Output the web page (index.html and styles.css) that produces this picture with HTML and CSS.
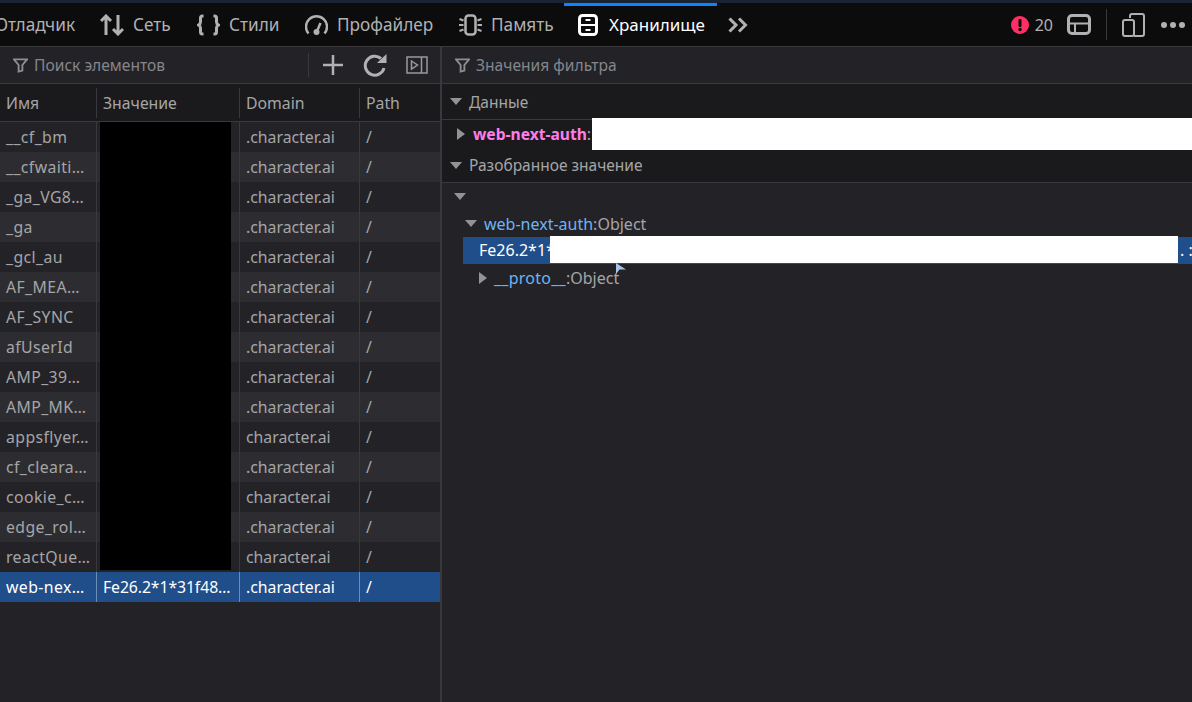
FILE: index.html
```html
<!DOCTYPE html>
<html lang="ru">
<head>
<meta charset="utf-8">
<title>Хранилище</title>
<link rel="stylesheet" href="styles.css">
</head>
<body>
<div class="strip"></div>
<header class="tabs">
  <nav class="tab-list">
    <div class="tab"><span>Отладчик</span></div>
    <div class="tab">
      <svg class="ic i-net" viewBox="0 0 24 22"><path d="M6 21V2M1 7l5-5 5 5M18 1V20M13 15l5 5 5-5"/></svg>
      <span>Сеть</span>
    </div>
    <div class="tab">
      <svg class="ic i-css" viewBox="0 0 23 22"><path d="M6.500 2H5.500Q3.500 2 3.500 4V8Q3.500 10 1.500 11Q3.500 12 3.500 14V18Q3.500 20 5.500 20H6.500M16.500 2H17.500Q19.500 2 19.500 4V8Q19.500 10 21.500 11Q19.500 12 19.500 14V18Q19.500 20 17.500 20H16.500"/></svg>
      <span>Стили</span>
    </div>
    <div class="tab">
      <svg class="ic i-gauge" viewBox="0 0 23 22"><path d="M3.500 19.500A10.500 10.500 0 1 1 19.500 19.500"/><path d="M12.500 16L15.500 9"/><circle class="ic-fill" cx="11.500" cy="18" r="3"/></svg>
      <span>Профайлер</span>
    </div>
    <div class="tab">
      <svg class="ic i-chip" viewBox="0 0 23 22"><rect x="6.500" y="1.500" width="10" height="19" rx="3"/><path class="thin" d="M.500 5l4 1.500M0 11H4.500M.500 17l4-1.500M22.500 5l-4 1.500M23 11H18.500M22.500 17l-4-1.500"/></svg>
      <span>Память</span>
    </div>
    <div class="tab tab-active">
      <svg class="ic i-store" viewBox="0 0 20 22"><rect x="1.500" y="1.500" width="17" height="19" rx="3"/><path class="thin" d="M1.500 11H18.500M7.500 6H12.500M7.500 16H12.500"/></svg>
      <span>Хранилище</span>
    </div>
    <svg class="ic more" viewBox="0 0 20 16"><path d="M1.500 1.500L8 8 1.500 14.500M11 1.500L17.500 8 11 14.500"/></svg>
  </nav>
  <div class="tab-tools">
    <svg class="err" viewBox="0 0 18 18"><circle cx="9" cy="9" r="9"/><rect x="7.500" y="3" width="3" height="8" rx="1"/><circle class="dot" cx="9" cy="13.500" r="1.700"/></svg>
    <span class="err-count">20</span>
    <svg class="ic layout" viewBox="0 0 24 21"><rect x="1.500" y="1.500" width="21" height="18" rx="3.500"/><path class="thin" d="M1.500 9.500H22.500M8 9.500V19.500"/></svg>
    <span class="tool-sep"></span>
    <svg class="ic device" viewBox="0 0 23 24"><path d="M8 5V3Q8 1 10 1H20Q22 1 22 3V21Q22 23 20 23H12"/><rect x="1" y="7" width="11" height="16" rx="2"/></svg>
    <span class="dots"><i></i><i></i><i></i></span>
  </div>
</header>
<main class="panes">
  <section class="left">
    <div class="toolbar">
      <svg class="filter" viewBox="0 0 16 16"><path d="M1 2H15L10 8V14L6 15V8Z"/></svg>
      <span class="search">Поиск элементов</span>
      <span class="bar-sep"></span>
      <svg class="ic plus" viewBox="0 0 22 22"><path d="M11 1V21M1 11H21"/></svg>
      <svg class="ic reload" viewBox="0 0 24 24"><path d="M21 15A9.500 9.500 0 1 1 18 5.500"/><path class="solid" d="M14 10H23.500V1Z"/></svg>
      <svg class="ic side" viewBox="0 0 22 18"><rect x="1" y="1" width="20" height="16"/><path d="M15.500 1V17M5.500 5l6 4-6 4Z"/></svg>
    </div>
    <div class="thead">
      <div>Имя</div><div>Значение</div><div>Domain</div><div>Path</div>
    </div>
    <div class="rows">
      <div class="row"><div>__cf_bm</div><div></div><div>.character.ai</div><div>/</div></div>
      <div class="row"><div>__cfwaiti…</div><div></div><div>.character.ai</div><div>/</div></div>
      <div class="row"><div>_ga_VG8…</div><div></div><div>.character.ai</div><div>/</div></div>
      <div class="row"><div>_ga</div><div></div><div>.character.ai</div><div>/</div></div>
      <div class="row"><div>_gcl_au</div><div></div><div>.character.ai</div><div>/</div></div>
      <div class="row"><div>AF_MEA…</div><div></div><div>.character.ai</div><div>/</div></div>
      <div class="row"><div>AF_SYNC</div><div></div><div>.character.ai</div><div>/</div></div>
      <div class="row"><div>afUserId</div><div></div><div>.character.ai</div><div>/</div></div>
      <div class="row"><div>AMP_39…</div><div></div><div>.character.ai</div><div>/</div></div>
      <div class="row"><div>AMP_MK…</div><div></div><div>.character.ai</div><div>/</div></div>
      <div class="row"><div>appsflyer…</div><div></div><div>character.ai</div><div>/</div></div>
      <div class="row"><div>cf_cleara…</div><div></div><div>.character.ai</div><div>/</div></div>
      <div class="row"><div>cookie_c…</div><div></div><div>character.ai</div><div>/</div></div>
      <div class="row"><div>edge_rol…</div><div></div><div>.character.ai</div><div>/</div></div>
      <div class="row"><div>reactQue…</div><div></div><div>character.ai</div><div>/</div></div>
      <div class="row row-sel"><div>web-nex…</div><div class="val-sel">Fe26.2*1*31f48…</div><div>.character.ai</div><div>/</div></div>
      <div class="redact-black"></div>
    </div>
  </section>
  <section class="right">
    <div class="toolbar">
      <svg class="filter" viewBox="0 0 16 16"><path d="M1 2H15L10 8V14L6 15V8Z"/></svg>
      <span class="search">Значения фильтра</span>
    </div>
    <div class="group"><i class="tri-down"></i>Данные</div>
    <div class="data-row">
      <i class="tri-right"></i><b class="pink">web-next-auth</b><span class="colon">:</span>
      <div class="redact-white data-redact"></div>
    </div>
    <div class="group group-2"><i class="tri-down"></i>Разобранное значение</div>
    <div class="tree">
      <div class="t-root"><i class="tri-down"></i></div>
      <div class="t-obj"><i class="tri-down"></i><span class="blue">web-next-auth</span>:Object</div>
      <div class="t-sel">Fe26.2*1*<div class="redact-white sel-redact"></div><span class="sel-tail">. :</span></div>
      <div class="t-proto"><i class="tri-right"></i><span class="blue proto">__proto__</span>:Object
        <svg class="cursor" viewBox="0 0 10 11"><path d="M0 0L10 6.500H3.500L0 11Z"/></svg>
      </div>
    </div>
  </section>
</main>
</body>
</html>
```
FILE: styles.css
```css
* { box-sizing: border-box; }
html, body { margin: 0; height: 100%; overflow: hidden; }
body {
  display: flex;
  flex-direction: column;
  width: 1192px;
  height: 702px;
  background: #232327;
  color: #b1b1b3;
  font-family: "Noto Sans", "Open Sans", sans-serif;
  font-size: 16px;
}
.strip { height: 3px; background: #1a2332; flex: none; }
.tabs {
  flex: none;
  height: 43px;
  background: #0c0c0d;
  display: flex;
  justify-content: space-between;
  align-items: center;
  overflow: hidden;
}
.tab-list {
  display: grid;
  grid-template-columns: 105px 97px 108px 154px 117px 153px auto;
  align-items: center;
  margin-left: -17px;
}
.tab { display: flex; align-items: center; gap: 9px; padding-left: 12px; height: 43px; color: #b1b1b3; white-space: nowrap; font-size: 17.200px; }
.tab-active { color: #fff; gap: 11px; padding-left: 14px; font-size: 17px; position: relative; }
.tab-active::before { content: ""; position: absolute; left: 0; right: 0; top: 0; height: 3px; background: #0a84ff; }
.ic { fill: none; stroke: #b1b1b3; stroke-width: 3; flex: none; }
.ic .thin { stroke-width: 2; }
.ic .solid { fill: #b1b1b3; stroke: none; }
.ic .ic-fill { fill: #b1b1b3; stroke: none; }
.i-net { width: 24px; height: 22px; }
.i-css { width: 23px; height: 22px; }
.i-gauge { width: 23px; height: 22px; stroke-width: 2.500; }
.i-chip { width: 23px; height: 22px; stroke-width: 2.500; }
.i-store { width: 20px; height: 22px; stroke: #fff; }
.more { width: 20px; height: 16px; margin-left: 11px; }
.tab-tools { display: flex; align-items: center; padding-right: 7px; }
.err { width: 18px; height: 18px; fill: #ff2e63; }
.err rect, .err .dot { fill: #0c0c0d; }
.err-count { margin-left: 6px; }
.layout { width: 24px; height: 21px; margin-left: 14px; }
.tool-sep { width: 1px; height: 31px; background: #38383d; margin: 0 15px; }
.device { width: 23px; height: 24px; stroke-width: 2; }
.dots { display: flex; gap: 3px; margin-left: 16px; }
.dots i { width: 6px; height: 6px; border-radius: 50%; background: #b1b1b3; }
.panes { flex: 1; display: flex; min-height: 0; border-top: 1px solid #38383d; }
.left { width: 442px; flex: none; border-right: 2px solid #38383d; display: flex; flex-direction: column; }
.right { flex: 1; display: flex; flex-direction: column; }
.toolbar {
  height: 37px;
  flex: none;
  display: flex;
  align-items: center;
  padding-left: 13px;
  border-bottom: 1px solid #38383d;
  background: #232327;
}
.filter { width: 15px; height: 16px; fill: none; stroke: #8f8f92; stroke-width: 2; flex: none; }
.search { margin-left: 6px; font-size: 15.600px; color: #85858c; }
.bar-sep { width: 1px; height: 24px; background: #38383d; margin-left: auto; }
.plus { width: 22px; height: 22px; margin-left: 13px; stroke-width: 2.500; }
.reload { width: 24px; height: 24px; margin-left: 19px; }
.side { width: 22px; height: 18px; margin: 0 12px 0 19px; stroke-width: 1.500; stroke: #9a9a9c; }
.thead, .row { display: grid; grid-template-columns: 96px 143px 120px 81px; font-size: 15.800px; }
.thead { height: 38px; flex: none; background: #1a1a1d; border-bottom: 1px solid #38383d; align-items: center; color: #a5a5a8; }
.thead > div { height: 30px; line-height: 30px; padding-left: 6px; border-left: 1px solid #38383d; }
.thead > div:first-child { border-left: none; }
.rows { position: relative; }
.row { height: 30px; line-height: 30px; color: #a5a5a8; background: #232327; }
.row:nth-child(even) { background: #2d2d31; }
.row > div { padding-left: 6px; border-left: 1px solid #38383d; white-space: nowrap; overflow: hidden; }
.row > div:first-child { border-left: none; letter-spacing: .4px; }
.row-sel, .row-sel:nth-child(even) { background: #204e8a; color: #fff; }
.row-sel > div { border-left-color: #6a8db8; }
.row-sel .val-sel { letter-spacing: -.1px; }
.redact-black { position: absolute; left: 100px; top: 0; width: 131px; height: 448px; background: #000; }
.group { height: 36px; flex: none; display: flex; align-items: center; padding-left: 8px; background: #1a1a1d; border-bottom: 1px solid #38383d; color: #a5a5a8; font-size: 15.500px; }
.group-2 { height: 37px; padding-top: 2px; }
.tri-down { width: 0; height: 0; border-left: 6px solid transparent; border-right: 6px solid transparent; border-top: 7px solid #939395; margin-right: 7px; flex: none; }
.tri-right { width: 0; height: 0; border-top: 6px solid transparent; border-bottom: 6px solid transparent; border-left: 8px solid #939395; flex: none; }
.data-row { height: 26px; flex: none; display: flex; align-items: center; padding: 1px 0 0 15px; position: relative; background: #1a1a1d; }
.pink { color: #ff7de9; margin-left: 8px; font-size: 15.600px; }
.colon { color: #a5a5a8; }
.redact-white { position: absolute; background: #fff; z-index: 2; }
.data-redact { left: 150px; right: 0; top: -2px; height: 32px; }
.tree { position: relative; flex: 1; color: #a5a5a8; }
.t-root { height: 27px; display: flex; align-items: center; padding-left: 12px; }
.t-obj { height: 27px; display: flex; align-items: center; padding-left: 23px; }
.blue { color: #6cb4f5; }
.t-sel { height: 27px; line-height: 26px; margin-left: 21px; padding-left: 16px; background: #204e8a; color: #fff; position: relative; white-space: nowrap; }
.sel-redact { left: 87px; width: 628px; top: -1px; height: 27px; }
.sel-tail { position: absolute; left: 717px; top: 0; }
.t-proto { height: 28px; display: flex; align-items: center; padding-left: 37px; position: relative; }
.proto { margin-left: 7px; letter-spacing: .25px; }
.cursor { position: absolute; left: 174px; top: -1px; width: 10px; height: 11px; fill: #a8c4e8; }
```
